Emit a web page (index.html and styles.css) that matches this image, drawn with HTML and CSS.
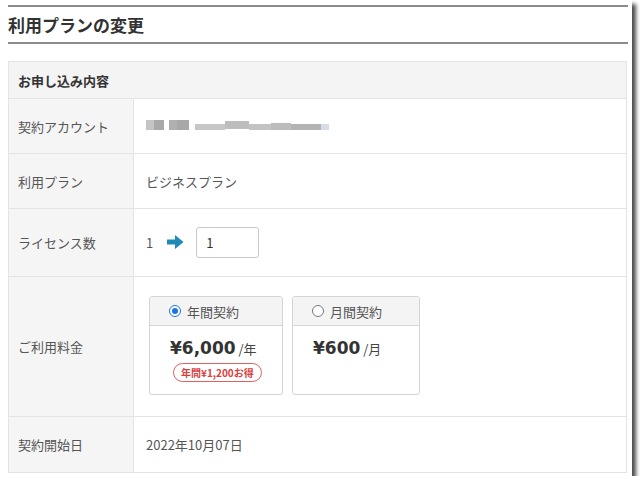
FILE: index.html
```html
<!DOCTYPE html>
<html lang="ja">
<head>
<meta charset="utf-8">
<link rel="stylesheet" href="styles.css">
</head>
<body>
<div class="frame">
  <h1 class="title">利用プランの変更</h1>
  <div class="box">
    <div class="box-head">お申し込み内容</div>
    <div class="row r-account">
      <div class="label">契約アカウント</div>
      <div class="value">
        <div class="blur">
          <span class="b b1"></span><span class="b b2"></span><span class="b b3"></span><span class="b b4"></span><span class="b b5"></span><span class="b b6"></span><span class="b b7"></span><span class="b b8"></span><span class="b b9"></span><span class="b b10"></span>
        </div>
      </div>
    </div>
    <div class="row r-plan">
      <div class="label">利用プラン</div>
      <div class="value">ビジネスプラン</div>
    </div>
    <div class="row r-license">
      <div class="label">ライセンス数</div>
      <div class="value">
        <span class="cur">1</span>
        <svg class="arrow" width="17" height="16" viewBox="0 0 17 16"><path d="M0 5.5h8V1l8.5 7L8 15v-4.5H0z" fill="#1e8ab5"/></svg>
        <div class="input">1</div>
      </div>
    </div>
    <div class="row r-fee">
      <div class="label">ご利用料金</div>
      <div class="value cards">
        <div class="card">
          <div class="card-head"><span class="radio on"></span>年間契約</div>
          <div class="card-body">
            <div class="price"><b>¥6,000</b> /年</div>
            <div class="badge">年間¥1,200お得</div>
          </div>
        </div>
        <div class="card">
          <div class="card-head"><span class="radio"></span>月間契約</div>
          <div class="card-body">
            <div class="price"><b>¥600</b> /月</div>
          </div>
        </div>
      </div>
    </div>
    <div class="row r-date">
      <div class="label">契約開始日</div>
      <div class="value">2022年10月07日</div>
    </div>
  </div>
</div>
</body>
</html>
```
FILE: styles.css
```css
html, body {
  margin: 0;
  padding: 0;
  background: #fff;
}
body {
  font-family: "Noto Sans CJK JP", "Noto Sans", sans-serif;
  color: #444;
}
.frame {
  width: 624px;
  height: 471px;
  padding: 5px 0 0 8px;
  background: #fff;
  box-shadow: 4px 4px 4px rgba(0, 0, 0, 0.7);
  overflow: hidden;
}
.title {
  margin: 0;
  width: 620px;
  border-top: 2px solid #8c8c8c;
  border-bottom: 2px solid #8c8c8c;
  font-size: 17px;
  line-height: 22px;
  font-weight: bold;
  color: #333;
  padding: 7px 0 6px 0;
}
.box {
  margin-top: 17px;
  width: 617px;
  border: 1px solid #e4e4e4;
}
.box-head {
  height: 36px;
  background: #f4f4f4;
  font-size: 13px;
  font-weight: bold;
  color: #333;
  display: flex;
  align-items: center;
  padding-left: 9px;
  border-bottom: 1px solid #e4e4e4;
}
.row {
  display: grid;
  grid-template-columns: 125px 1fr;
  border-bottom: 1px solid #e4e4e4;
}
.row:last-child {
  border-bottom: none;
}
.label {
  background: #f5f5f5;
  border-right: 1px solid #e4e4e4;
  font-size: 13px;
  color: #555;
  display: flex;
  align-items: center;
  padding-left: 9px;
}
.value {
  font-size: 13px;
  color: #555;
  display: flex;
  align-items: center;
  padding-left: 12px;
}
.r-account { height: 54px; }
.r-plan { height: 54px; }
.r-license { height: 67px; }
.r-fee { height: 139px; }
.r-date { height: 55px; }

.blur {
  display: flex;
  align-items: center;
  height: 12px;
  margin-top: -2px;
}
.b { display: inline-block; height: 10px; background: #b8b8b8; }
.b1 { width: 8px; background: #c4c4c4; }
.b2 { width: 10px; background: #a9a9a9; margin-right: 5px; }
.b3 { width: 8px; background: #b0b0b0; }
.b4 { width: 12px; background: #a8a8a8; margin-right: 6px; }
.b5 { width: 30px; height: 6px; background: #c6c6c6; margin-top: 3px; }
.b6 { width: 24px; height: 8px; background: #bdbdbd; }
.b7 { width: 22px; height: 6px; background: #c3c3c3; margin-top: 3px; }
.b8 { width: 20px; height: 7px; background: #bcbcbc; margin-top: 3px; }
.b9 { width: 30px; height: 6px; background: #b3b3b3; margin-top: 3px; }
.b10 { width: 8px; height: 6px; background: #d8dbe8; margin-top: 3px; }

.cur { margin-right: 14px; }
.arrow { margin-right: 12px; margin-top: -1px; }
.input {
  width: 52px;
  height: 29px;
  border: 1px solid #c8c8c8;
  border-radius: 3px;
  display: flex;
  align-items: center;
  padding-left: 9px;
  color: #333;
  font-size: 13px;
}

.cards {
  align-items: flex-start;
  padding-left: 15px;
  padding-top: 19px;
  gap: 9px;
}
.card {
  width: 132px;
  height: 97px;
  border: 1px solid #d4d4d4;
  border-radius: 3px;
  overflow: hidden;
}
.card + .card { width: 126px; }
.card-head {
  height: 28px;
  background: #f4f4f4;
  border-bottom: 1px solid #d4d4d4;
  display: flex;
  align-items: center;
  padding-left: 19px;
  font-size: 13px;
  color: #555;
}
.radio {
  width: 10px;
  height: 10px;
  border: 1px solid #777;
  border-radius: 50%;
  margin-right: 6px;
  background: #fff;
  box-sizing: content-box;
  position: relative;
}
.radio.on {
  border-color: #1a73e8;
}
.radio.on::after {
  content: "";
  position: absolute;
  left: 2px;
  top: 2px;
  width: 6px;
  height: 6px;
  border-radius: 50%;
  background: #1a73e8;
}
.card-body {
  padding: 11px 0 0 20px;
}
.price {
  font-size: 13px;
  color: #444;
  line-height: 22px;
}
.price b {
  font-family: "DejaVu Sans", "Noto Sans CJK JP", sans-serif;
  font-size: 17px;
  color: #333;
}
.badge {
  margin-top: 3px;
  margin-left: 3px;
  display: inline-block;
  border: 1px solid #e06060;
  border-radius: 10px;
  color: #d84040;
  font-size: 10px;
  font-weight: bold;
  line-height: 17px;
  padding: 0 7px;
}
```
